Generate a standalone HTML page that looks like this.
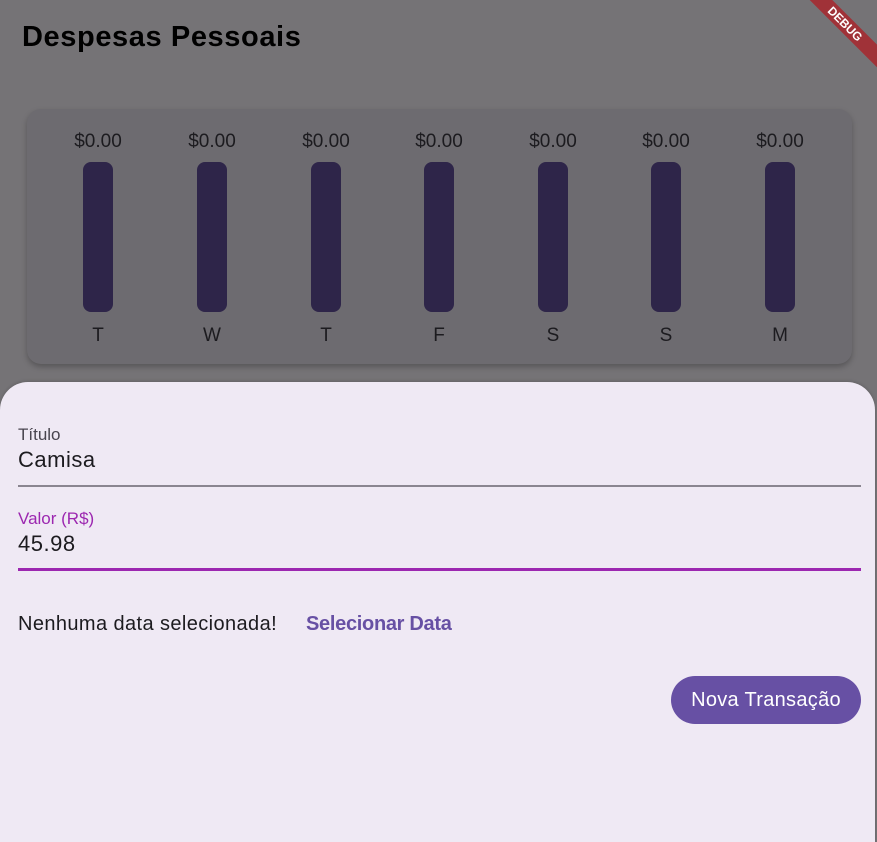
<!DOCTYPE html>
<html><head><meta charset="utf-8"><style>
*{margin:0;padding:0;box-sizing:border-box}
body{width:877px;height:828px;background:#757376;position:relative;overflow:hidden;font-family:"Liberation Sans",sans-serif}
.t{position:absolute;left:22px;top:21px;font-size:29px;font-weight:bold;color:#000;letter-spacing:0.6px}
.card{position:absolute;left:27px;top:109px;width:825px;height:255px;background:#6d6b70;border-radius:14px;box-shadow:0 3px 6px rgba(0,0,0,.25)}
.col{position:absolute;top:0;width:80px;text-align:center}
.amt{position:absolute;top:22px;width:80px;font-size:19px;color:#1c1b1f}
.bar{position:absolute;left:25px;top:53px;width:30px;height:150px;background:#2e2549;border-radius:8px}
.d{position:absolute;top:216px;width:80px;font-size:19px;color:#1c1b1f}
.sheet{position:absolute;left:0;top:382px;width:875px;height:460px;background:#efe9f4;border-radius:28px 28px 0 0;box-shadow:0 -1px 3px rgba(0,0,0,.15)}
.abs{position:absolute}
.dbg{position:absolute;right:-38px;top:16px;width:140px;height:16px;background:#a03238;transform:rotate(45deg);color:#fff;font-size:12px;font-weight:bold;text-align:center;line-height:16px}
</style></head><body>
<div class="t">Despesas Pessoais</div>
<div class="card">
<div class="col" style="left:31px"><div class="amt">$0.00</div><div class="bar"></div><div class="d">T</div></div>
<div class="col" style="left:145px"><div class="amt">$0.00</div><div class="bar"></div><div class="d">W</div></div>
<div class="col" style="left:259px"><div class="amt">$0.00</div><div class="bar"></div><div class="d">T</div></div>
<div class="col" style="left:372px"><div class="amt">$0.00</div><div class="bar"></div><div class="d">F</div></div>
<div class="col" style="left:486px"><div class="amt">$0.00</div><div class="bar"></div><div class="d">S</div></div>
<div class="col" style="left:599px"><div class="amt">$0.00</div><div class="bar"></div><div class="d">S</div></div>
<div class="col" style="left:713px"><div class="amt">$0.00</div><div class="bar"></div><div class="d">M</div></div>
</div>
<div class="sheet">
<div class="abs" style="left:18px;top:43px;font-size:17px;color:#49454f">Título</div>
<div class="abs" style="left:18px;top:65px;font-size:22px;color:#1c1b1f;letter-spacing:0.5px">Camisa</div>
<div class="abs" style="left:18px;top:103px;width:843px;height:2px;background:#8a8590"></div>
<div class="abs" style="left:18px;top:127px;font-size:17px;color:#9c27b0">Valor (R$)</div>
<div class="abs" style="left:18px;top:149px;font-size:22px;color:#1c1b1f;letter-spacing:0.5px">45.98</div>
<div class="abs" style="left:18px;top:186px;width:843px;height:3px;background:#9c27b0"></div>
<div class="abs" style="left:18px;top:231px;font-size:20px;color:#1c1b1f;letter-spacing:0.4px">Nenhuma data selecionada!</div>
<div class="abs" style="left:306px;top:231px;font-size:20px;font-weight:bold;color:#6750a4;letter-spacing:-0.3px">Selecionar Data</div>
<div class="abs" style="left:671px;top:294px;width:190px;height:48px;border-radius:24px;background:#6750a4;color:#fff;font-size:20px;text-align:center;line-height:48px;letter-spacing:0.3px">Nova Transação</div>
</div>
<div class="dbg">DEBUG</div>
</body></html>
